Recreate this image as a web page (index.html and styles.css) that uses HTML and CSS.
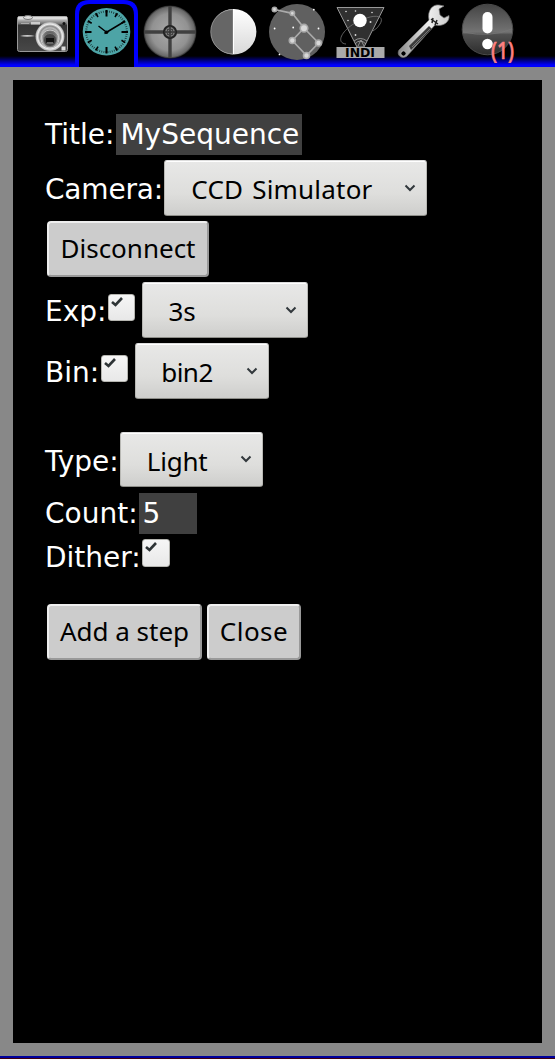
FILE: index.html
```html
<!DOCTYPE html>
<html lang="en">
<head>
<meta charset="utf-8">
<title>Sequence</title>
<link rel="stylesheet" href="styles.css">
</head>
<body>
<nav class="tabs">
  <svg class="icons" width="555" height="67" viewBox="0 0 555 67">
    <defs>
      <linearGradient id="metal" x2="0" y2="1"><stop offset="0" stop-color="#eee"/><stop offset=".2" stop-color="#777"/><stop offset=".25" stop-color="#333"/><stop offset="1" stop-color="#484848"/></linearGradient>
      <radialGradient id="lens"><stop offset="0" stop-color="#333"/><stop offset=".4" stop-color="#777"/><stop offset=".6" stop-color="#bbb"/><stop offset=".72" stop-color="#888"/><stop offset=".85" stop-color="#eee"/><stop offset="1" stop-color="#aaa"/></radialGradient>
      <radialGradient id="scope"><stop offset="0" stop-color="#aaa"/><stop offset=".7" stop-color="#929292"/><stop offset=".93" stop-color="#686868"/><stop offset="1" stop-color="#222"/></radialGradient>
      <linearGradient id="light" x2="0" y2="1"><stop offset="0" stop-color="#fff"/><stop offset="1" stop-color="#d8d8d8"/></linearGradient>
      <linearGradient id="alert" x2="0" y2="1"><stop offset="0" stop-color="#444"/><stop offset=".55" stop-color="#737373"/><stop offset=".6" stop-color="#505050"/><stop offset="1" stop-color="#2c2c2c"/></linearGradient>
      <linearGradient id="steel" x2="1" y2="0"><stop offset="0" stop-color="#888"/><stop offset=".6" stop-color="#eee"/><stop offset="1" stop-color="#ccc"/></linearGradient>
    </defs>
    <path d="M75 67V14Q75 0 89 0H124Q138 0 138 14V67z" fill="#00f"/>
    <path d="M79 67V15Q79 4 90 4H123Q134 4 134 15V67z" fill="#000"/>
    <!-- camera -->
    <path d="M23 17Q27 14 32 17z" fill="#ccc"/>
    <rect x="17.500" y="16.500" width="50" height="35" rx="2" fill="url(#metal)" stroke="#999"/>
    <path d="M18 18H67" stroke="#ddd" stroke-width="2.500"/>
    <ellipse cx="28" cy="17.500" rx="4.500" ry="2" fill="#ddd" stroke="#777"/>
    <rect x="31" y="22" width="9" height="2.500" fill="#ccc"/><path d="M21 23.500H29" stroke="#aaa"/><circle cx="64" cy="23.500" r="1.500" fill="#111"/>
    <path d="M20 36Q27 34 35 36Q27 37.500 20 36z" fill="#ccc"/>
    <circle cx="50" cy="36.500" r="14.500" fill="url(#lens)"/><circle cx="50" cy="39" r="9" fill="none" stroke="#ccc"/><circle cx="50" cy="40" r="6.500" fill="#444" stroke="#777"/><rect x="46" y="38" width="8" height="6" fill="#111"/><path d="M47 42H53L54 44H46z" fill="#666"/>
    <rect x="61.500" y="46.500" width="4" height="4" fill="#ddd"/>
    <!-- clock -->
    <circle cx="106.500" cy="31.800" r="23.800" fill="#4da4a6"/>
    <circle cx="106.500" cy="31.800" r="20.300" fill="none" stroke="#142c2c" stroke-width="2" stroke-dasharray=".7 1.426"/>
    <path d="M106.500 10V16.500M106.500 47V53.500M85 32H91.500M121.500 32H128" stroke="#000" stroke-width="2"/>
    <path d="M95.700 13.100L98 17M117.300 13.100L115 17M87.800 21L91.700 23.300M125.200 21L121.500 23.300M87.800 42.600L91.700 40.300M125.200 42.600L121.500 40.300M95.700 50.500L98 46.600M117.300 50.500L115 46.600" stroke="#000" stroke-width="1.600"/>
    <path d="M104.500 33.500L124.500 21.500M107.500 33L98.500 26" stroke="#000" stroke-width="1.500"/><circle cx="106.500" cy="32.200" r="1.800"/>
    <!-- crosshair -->
    <circle cx="170" cy="32" r="26.500" fill="url(#scope)"/>
    <path d="M170 6V58M144 32H196" stroke="#404040" stroke-width="3.400"/><circle cx="170" cy="32" r="6" fill="#777" stroke="#222" stroke-width="2.200"/><path d="M170 26V38M164 32H176" stroke="#333" stroke-width="1.500"/><rect x="167.500" y="29.500" width="5" height="5" fill="none" stroke="#444"/>
    <!-- half-lit disc -->
    <circle cx="233.700" cy="31.700" r="22.700" fill="url(#light)"/><path d="M233 9.500A22.200 22.200 0 0 0 233 54z" fill="#666" stroke="#999" stroke-width=".8"/><path d="M233.500 9V54" stroke="#fff"/>
    <!-- constellation -->
    <circle cx="297" cy="31.900" r="28" fill="#606060"/>
    <path d="M274.500 9.500L292.300 13.300L304 28L292.300 40.500L306.500 55.500L318.500 43L304 28" fill="none" stroke="#aaa" stroke-width="1.700"/>
    <g fill="#d8d8d8" stroke="#a8a8a8" stroke-width="1.600"><circle cx="274.500" cy="9.500" r="2.200"/><circle cx="292.300" cy="13.300" r="2.200"/><circle cx="304" cy="28.200" r="3.800"/><circle cx="292.300" cy="40.500" r="3"/><circle cx="306.500" cy="55.500" r="3"/><circle cx="318.500" cy="43" r="3"/></g>
    <g fill="#fff"><circle cx="313.800" cy="9.700" r=".9"/><circle cx="274.600" cy="28.500" r=".9"/><circle cx="293.200" cy="27.500" r=".9"/><circle cx="318.500" cy="28.500" r=".9"/><circle cx="279.500" cy="54.400" r=".9"/></g>
    <!-- INDI -->
    <path d="M337 7.500H384L364 47H357z" fill="#303030" stroke="#999"/>
    <path d="M346 44C335 43 342 29 359 21S385 16 380 24Q378 28 373 31" fill="none" stroke="#777" stroke-width=".8"/>
    <circle cx="360" cy="20.500" r="6.700" fill="#fff"/>
    <g fill="#ddd"><circle cx="346" cy="11.500" r=".8"/><circle cx="355.500" cy="11" r=".8"/><circle cx="372" cy="12.500" r=".8"/><circle cx="370.500" cy="22" r="1"/><circle cx="348" cy="20.500" r=".8"/><circle cx="355.500" cy="35" r=".9"/></g>
    <path d="M354 41Q360 36 367 41M355 44Q360 38 366 44M358 46L361 40L364 46" fill="none" stroke="#aaa" stroke-width=".8"/>
    <rect x="336.500" y="47" width="48" height="11" fill="#aaa"/>
    <text class="indi" x="345" y="57" textLength="30" lengthAdjust="spacingAndGlyphs">INDI</text>
    <!-- wrench -->
    <path d="M399 50L429 20C427 10 433 4 439 5L444 6L439 9L440 15L444 18L449 15.500C450 22 443 27 435 25L407 56C402 60 396 55 399 50z" fill="url(#steel)" stroke="#777" stroke-width=".7"/>
    <path d="M409 46L429 26L432 29L411 50z" fill="#3c3c3c"/><path d="M412 47L430 29" stroke="#777"/><path d="M431 19L438 24M433 18L432 23M437 20L435 25" stroke="#222" stroke-width="1.500"/><circle cx="403.500" cy="53.500" r="2.700" fill="#000" stroke="#bbb"/>
    <!-- alert -->
    <circle cx="487.500" cy="29.500" r="25.300" fill="url(#alert)" stroke="#4a4a4a"/>
    <path d="M463 32Q490 38 512 29" fill="none" stroke="#777" stroke-width=".8"/>
    <rect x="482.500" y="12" width="10" height="21.500" rx="5" fill="#fff"/><circle cx="487.500" cy="44" r="5.300" fill="#fff"/>
    <text class="badge" x="491" y="59" textLength="23" lengthAdjust="spacingAndGlyphs">(1)</text>
  </svg>
</nav>
<main class="panel">
  <div class="row field"><label>Title:</label><span class="input title">MySequence</span></div>
  <div class="row"><label class="tight">Camera:</label><div class="select camera"><span class="value v-camera">CCD Simulator</span><svg class="chevron" viewBox="0 0 12 8"><path d="M1.500 1.500L6 6L10.500 1.500"/></svg></div></div>
  <div class="row"><button class="btn disconnect">Disconnect</button></div>
  <div class="row"><label>Exp:</label><span class="check"><svg viewBox="0 0 12 10"><path d="M1 5L4.500 8L11 1"/></svg></span><div class="select exp"><span class="value">3s</span><svg class="chevron" viewBox="0 0 12 8"><path d="M1.500 1.500L6 6L10.500 1.500"/></svg></div></div>
  <div class="row"><label>Bin:</label><span class="check"><svg viewBox="0 0 12 10"><path d="M1 5L4.500 8L11 1"/></svg></span><div class="select bin"><span class="value v-bin">bin2</span><svg class="chevron" viewBox="0 0 12 8"><path d="M1.500 1.500L6 6L10.500 1.500"/></svg></div></div>
  <div class="row type-row"><label>Type:</label><div class="select type"><span class="value v-type">Light</span><svg class="chevron" viewBox="0 0 12 8"><path d="M1.500 1.500L6 6L10.500 1.500"/></svg></div></div>
  <div class="row field"><label>Count:</label><span class="input count">5</span></div>
  <div class="row dither-row"><label>Dither:</label><span class="check"><svg viewBox="0 0 12 10"><path d="M1 5L4.500 8L11 1"/></svg></span></div>
  <div class="row actions"><button class="btn add">Add a step</button><button class="btn close">Close</button></div>
</main>
<footer class="bottom"></footer>
</body>
</html>
```
FILE: styles.css
```css
* { box-sizing: border-box; }
body { margin: 0; height: 1059px; overflow: hidden; display: flex; flex-direction: column; background: #888; color: #fff; font: 28px/33px "DejaVu Sans", sans-serif; }
.tabs { height: 67px; flex: none; background: linear-gradient(#000 56px, #00f 65px); }
.icons { display: block; }
.indi { font: bold 12px "DejaVu Sans", sans-serif; fill: #000; }
.badge { font: 500 23px "Noto Sans", sans-serif; fill: #ff8080; stroke: #ff8080; stroke-width: .6px; }
.panel { margin: 13px 13px 0; height: 963px; flex: none; background: #000; padding: 34px 32px 0; display: flex; flex-direction: column; gap: 5px; }
.bottom { margin-top: 13px; height: 3px; background: linear-gradient(#00009c 2px, #400010 2px); }
.row { display: flex; align-items: flex-start; height: 56px; flex: none; white-space: nowrap; }
label { padding-top: 13px; }
.tight { letter-spacing: -.2px; padding-right: 1.400px; }
.field { height: 41px; }
.field label { padding-top: 4px; }
.input { height: 41px; background: #404040; padding: 4px 4px 0; }
.title { width: 186px; margin-left: 2px; }
.count { width: 58px; margin-left: 1px; }
.select { height: 56px; display: flex; justify-content: space-between; border: 1px solid #aaa; border-color: #ddd #b8b8b4 #8e8e89; border-radius: 3px; background: linear-gradient(#e8e8e7, #dededc 60%, #cececc); box-shadow: inset 0 1px #fff; color: #000; font: 26px/36px "Noto Sans", sans-serif; padding: 10px 10px 0 25px; }
.v-camera { letter-spacing: .2px; word-spacing: 2px; padding-left: 1px; }
.v-bin { letter-spacing: -.5px; }
.v-type { letter-spacing: -.2px; padding-left: 1px; }
.camera { width: 263px; }
.exp { width: 166px; margin-left: 7px; }
.bin { width: 134px; margin-left: 7px; }
.type { width: 143px; height: 55px; margin-left: 1px; }
.chevron { width: 12px; height: 8px; margin-top: 13px; fill: none; stroke: #32383c; stroke-width: 2; }
.check { width: 27px; height: 27px; margin: 12px 0 0 2px; border: 1px solid #b5b5b0; border-radius: 3px; background: linear-gradient(#f6f6f6, #e8e8e8); display: flex; padding: 2px; }
.check svg { width: 12px; height: 10px; fill: none; stroke: #2e3436; stroke-width: 2.600; }
.type-row { margin-top: 28px; }
.type-row .chevron { margin-top: 12px; }
.dither-row { height: 37px; margin-top: -1px; }
.dither-row label { padding-top: 3px; }
.dither-row .check { margin: 1px 0 0 1px; width: 28px; height: 28px; }
.actions { margin-top: 24px; gap: 5px; }
.btn { height: 56px; margin: 0; padding: 0 0 3px; border: 2px solid; border-color: #eee #999 #999 #eee; border-radius: 4px; background: #ccc; color: #000; font: 26px/36px "Noto Sans", sans-serif; }
.disconnect { width: 162px; margin-left: 2px; }
.add { width: 155px; margin-left: 2px; }
.close { width: 94px; letter-spacing: .5px; }
```
